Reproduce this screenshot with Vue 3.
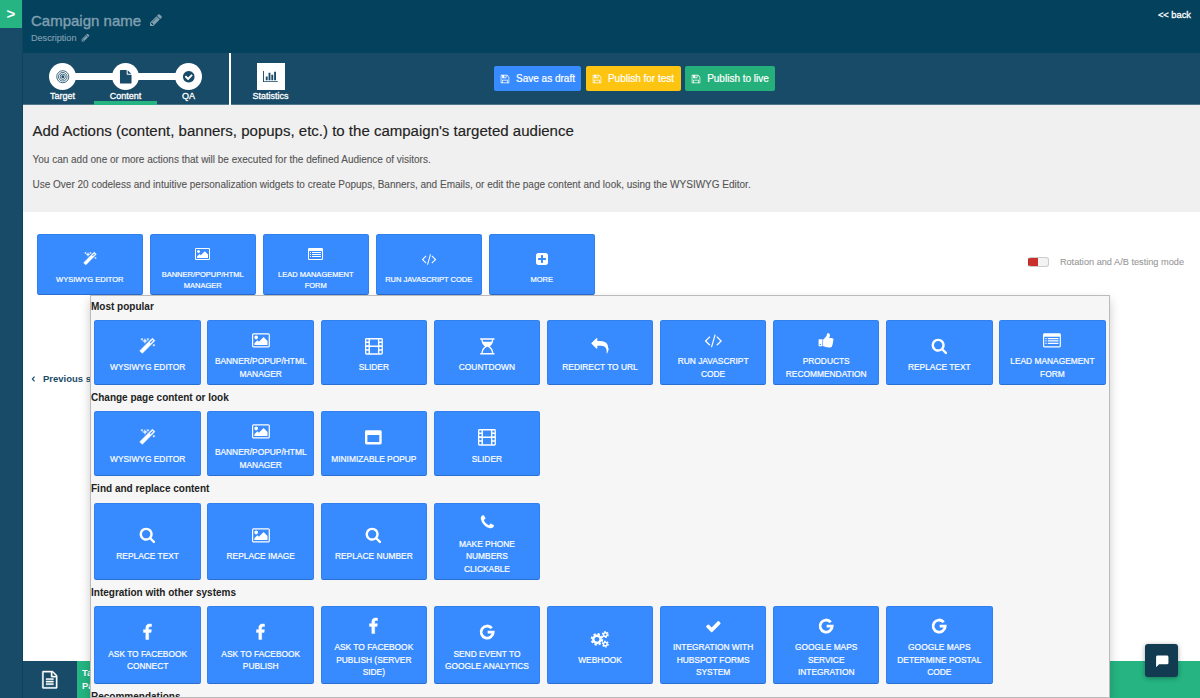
<template>
  <div class="app">
    <aside class="sidebar">
      <button class="toggle">&gt;</button>
    </aside>

    <div class="main">
      <header class="header">
        <div>
          <div class="campaign-name">Campaign name <Icon name="pencil" /></div>
          <div class="campaign-desc">Description <Icon name="pencil" /></div>
        </div>
        <a class="back">&lt;&lt; back</a>
      </header>

      <nav class="toolbar">
        <div class="steps">
          <div
            v-for="step in steps"
            :key="step.label"
            class="step"
            :class="{ active: step.active }"
          >
            <span class="step-circle"><Icon :name="step.icon" /></span>
            <span class="step-label">{{ step.label }}</span>
          </div>
        </div>
        <div class="stats">
          <span class="stats-box"><Icon name="chart" /></span>
          <span class="step-label">Statistics</span>
        </div>
        <div class="buttons">
          <button class="btn btn-draft"><Icon name="save" /><span>Save as draft</span></button>
          <button class="btn btn-test"><Icon name="save" /><span>Publish for test</span></button>
          <button class="btn btn-live"><Icon name="save" /><span>Publish to live</span></button>
        </div>
      </nav>

      <section class="intro">
        <h1>Add Actions (content, banners, popups, etc.) to the campaign's targeted audience</h1>
        <p>You can add one or more actions that will be executed for the defined Audience of visitors.</p>
        <p>Use Over 20 codeless and intuitive personalization widgets to create Popups, Banners, and Emails, or edit the page content and look, using the WYSIWYG Editor.</p>
      </section>

      <section class="content">
        <div class="actions">
          <button v-for="a in quickActions" :key="a.text" class="tile small">
            <span class="tile-icon"><Icon :name="a.icon" /></span>
            <span class="tile-text">{{ a.text }}</span>
          </button>
          <div class="rotation">
            <span class="switch"></span>
            <span>Rotation and A/B testing mode</span>
          </div>
        </div>
        <a class="previous"><Icon name="left" /><span>Previous step</span></a>
      </section>

      <footer class="footer">
        <div class="footer-icon"><Icon name="fileText" /></div>
        <div class="footer-text">Target<br>Pages</div>
      </footer>
    </div>

    <div class="more-menu">
      <div v-for="group in groups" :key="group.title" class="group">
        <h2>{{ group.title }}</h2>
        <div class="group-row" :class="{ tall: group.tall }">
          <button v-for="a in group.items" :key="a.text" class="tile">
            <span class="tile-icon"><Icon :name="a.icon" /></span>
            <span class="tile-text">{{ a.text }}</span>
          </button>
        </div>
      </div>
    </div>

    <button class="chat"><Icon name="chat" /></button>
  </div>
</template>

<script setup>
import { h } from 'vue'

// [viewBox width, markup], every icon is 1792 high
const icons = {
  code: [1792, '<path d="M553 1399l-50 50q-10 10-23 10t-23-10l-466-466q-10-10-10-23t10-23l466-466q10-10 23-10t23 10l50 50q10 10 10 23t-10 23l-393 393 393 393q10 10 10 23t-10 23zm591-1067l-373 1291q-4 13-15.5 19.5t-23.5 2.5l-62-17q-13-4-19.5-15.5t-2.5-24.5l373-1291q4-13 15.5-19.5t23.5-2.5l62 17q13 4 19.5 15.5t2.5 24.5zm657 651l-466 466q-10 10-23 10t-23-10l-50-50q-10-10-10-23t10-23l393-393-393-393q-10-10-10-23t10-23l50-50q10-10 23-10t23 10l466 466q10 10 10 23t-10 23z"/>'],
  search: [1792, '<path transform="translate(0 -60)" d="M1216 832q0-185-131.5-316.5t-316.5-131.5-316.5 131.5-131.5 316.5 131.5 316.5 316.5 131.5 316.5-131.5 131.5-316.5zm512 832q0 52-38 90t-90 38q-54 0-90-38l-343-342q-179 124-399 124-143 0-273.5-55.5t-225-150-150-225-55.5-273.5 55.5-273.5 150-225 225-150 273.5-55.5 273.5 55.5 225 150 150 225 55.5 273.5q0 220-124 399l343 343q37 37 37 90z"/>'],
  picture: [1920, '<path transform="translate(64)" d="M576 576q0 80-56 136t-136 56-136-56-56-136 56-136 136-56 136 56 56 136zm1024 384v448h-1408v-192l320-320 160 160 512-512zm96-704h-1600q-13 0-22.5 9.5t-9.5 22.5v1216q0 13 9.5 22.5t22.5 9.5h1600q13 0 22.5-9.5t9.5-22.5v-1216q0-13-9.5-22.5t-22.5-9.5zm160 32v1216q0 66-47 113t-113 47h-1600q-66 0-113-47t-47-113v-1216q0-66 47-113t113-47h1600q66 0 113 47t47 113z"/>'],
  facebook: [1792, '<path stroke="currentColor" stroke-width="50" d="M1343 12v264h-157q-86 0-116 36t-30 108v189h293l-39 296h-254v759h-306v-759h-255v-296h255v-218q0-186 104-288.5t277-102.5q147 0 228 12z"/>'],
  check: [1792, '<path d="M1671 566q0 40-28 68l-724 724-136 136q-28 28-68 28t-68-28l-136-136-362-362q-28-28-28-68t28-68l136-136q28-28 68-28t68 28l294 295 656-657q28-28 68-28t68 28l136 136q28 28 28 68z"/>'],
  plus: [1792, '<path d="M1408 960v-128q0-26-19-45t-45-19h-320v-320q0-26-19-45t-45-19h-128q-26 0-45 19t-19 45v320h-320q-26 0-45 19t-19 45v128q0 26 19 45t45 19h320v320q0 26 19 45t45 19h128q26 0 45-19t19-45v-320h320q26 0 45-19t19-45zm256-544v960q0 119-84.5 203.5t-203.5 84.5h-960q-119 0-203.5-84.5t-84.5-203.5v-960q0-119 84.5-203.5t203.5-84.5h960q119 0 203.5 84.5t84.5 203.5z"/>'],
  checkCircle: [1792, '<path d="M1412 734q0-28-18-46l-91-90q-19-19-45-19t-45 19l-408 407-226-226q-19-19-45-19t-45 19l-91 90q-18 18-18 46 0 27 18 45l362 362q19 19 45 19 27 0 46-19l543-543q18-18 18-45zm252 162q0 209-103 385.5t-279.5 279.5-385.5 103-385.5-103-279.5-279.5-103-385.5 103-385.5 279.5-279.5 385.5-103 385.5 103 279.5 279.5 103 385.5z"/>'],
  phone: [1792, '<path d="M1600 1240q0 27-10 70.5t-21 68.5q-21 50-122 106-94 51-186 51-27 0-53-3.5t-57.5-12.5-47-14.5-55.5-20.5-49-18q-98-35-175-83-127-79-264-216t-216-264q-48-77-83-175-3-9-18-49t-20.5-55.5-14.5-47-12.5-57.5-3.5-53q0-92 51-186 56-101 106-122 25-11 68.5-21t70.5-10q14 0 21 3 18 6 53 76 11 19 30 54t35 63.5 31 53.5q3 4 17.5 25t21.5 35.5 7 28.5q0 20-28.5 50t-62 55-62 53-28.5 46q0 9 5 22.5t8.5 20.5 14 24 11.5 19q76 137 174 235t235 174q2 1 19 11.5t24 14 20.5 8.5 22.5 5q18 0 46-28.5t53-62 55-62 50-28.5q14 0 28.5 7t35.5 21.5 25 17.5q25 15 53.5 31t63.5 35 54 30q70 35 76 53 3 7 3 21z"/>'],
  pencil: [1792, '<path d="M491 1536l91-91-235-235-91 91v107h128v128h107zm523-928q0-22-22-22-10 0-17 7l-542 542q-7 7-7 17 0 22 22 22 10 0 17-7l542-542q7-7 7-17zm-54-192l416 416-832 832h-416v-416zm683 96q0 53-37 90l-166 166-416-416 166-165q36-38 90-38 53 0 91 38l235 234q37 39 37 91z"/>'],
  save: [1792, '<path d="M512 1536h768v-384h-768v384zm896 0h128v-896q0-14-10-38.5t-20-34.5l-281-281q-10-10-34-20t-39-10v416q0 40-28 68t-68 28h-576q-40 0-68-28t-28-68v-416h-128v1280h128v-416q0-40 28-68t68-28h832q40 0 68 28t28 68v416zm-384-928v-320q0-13-9.5-22.5t-22.5-9.5h-192q-13 0-22.5 9.5t-9.5 22.5v320q0 13 9.5 22.5t22.5 9.5h192q13 0 22.5-9.5t9.5-22.5zm640 32v928q0 40-28 68t-68 28h-1344q-40 0-68-28t-28-68v-1344q0-40 28-68t68-28h928q40 0 88 20t76 48l280 280q28 28 48 76t20 88z"/>'],
  fileText: [1792, '<path stroke="currentColor" stroke-width="40" d="M1596 380q28 28 48 76t20 88v1152q0 40-28 68t-68 28h-1344q-40 0-68-28t-28-68v-1600q0-40 28-68t68-28h896q40 0 88 20t76 48zm-444-244v376h376q-10-29-22-41l-313-313q-12-12-41-22zm384 1528v-1024h-416q-40 0-68-28t-28-68v-416h-768v1536h1280zm-1024-864q0-14 9-23t23-9h704q14 0 23 9t9 23v64q0 14-9 23t-23 9h-704q-14 0-23-9t-9-23v-64zm736 224q14 0 23 9t9 23v64q0 14-9 23t-23 9h-704q-14 0-23-9t-9-23v-64q0-14 9-23t23-9h704zm0 256q14 0 23 9t9 23v64q0 14-9 23t-23 9h-704q-14 0-23-9t-9-23v-64q0-14 9-23t23-9h704z"/>'],
  file: [1792, '<path d="M1152 512v-472q22 14 36 28l408 408q14 14 28 36h-472zm-128 32q0 40 28 68t68 28h544v1056q0 40-28 68t-68 28h-1344q-40 0-68-28t-28-68v-1600q0-40 28-68t68-28h800v544z"/>'],
  chart: [2048, '<path d="M640 896v512h-256v-512h256zm384-512v1024h-256v-1024h256zm1024 1152v128h-2048v-1536h128v1408h1920zm-640-896v768h-256v-768h256zm384-384v1152h-256v-1152h256z"/>'],
  magic: [1792, '<path stroke="currentColor" stroke-width="40" d="M1254 581l293-293-107-107-293 293zm447-293q0 27-18 45l-1286 1286q-18 18-45 18t-45-18l-198-198q-18-18-18-45t18-45l1286-1286q18-18 45-18t45 18l198 198q18 18 18 45zm-1351-190l98 30-98 30-30 98-30-98-98-30 98-30 30-98zm350 162l196 60-196 60-60 196-60-196-196-60 196-60 60-196zm930 478l98 30-98 30-30 98-30-98-98-30 98-30 30-98zm-640-640l98 30-98 30-30 98-30-98-98-30 98-30 30-98z"/>'],
  reply: [1792, '<path d="M1792 1120q0 166-127 451-3 7-10.5 24t-13.5 30-13 22q-12 17-28 17-15 0-23.5-10t-8.5-25q0-9 2.5-26.5t2.5-23.5q5-68 5-123 0-112-19.5-200.5t-54-153.5-89-112-117-78-146.5-49-167.5-24-189.5-7h-224v256q0 26-19 45t-45 19-45-19l-512-512q-19-19-19-45t19-45l512-512q19-19 45-19t45 19 19 45v256h224q713 0 875 403 53 134 53 333z"/>'],
  thumb: [1792, '<path d="M320 1344q0-26-19-45t-45-19q-27 0-45.5 19t-18.5 45q0 27 18.5 45.5t45.5 18.5q26 0 45-18.5t19-45.5zm160-512v640q0 26-19 45t-45 19h-288q-26 0-45-19t-19-45v-640q0-26 19-45t45-19h288q26 0 45 19t19 45zm1184 0q0 86-55 149 15 44 15 76 3 76-43 137 17 56 0 117-15 57-54 94 9 112-49 181-64 76-197 78h-129q-66 0-144-15.5t-121.5-29-120.5-39.5q-123-43-158-44-26-1-45-19.5t-19-44.5v-641q0-25 18-43.5t43-20.5q24-2 76-59t101-121q68-87 101-120 18-18 31-48t17.5-48.5 13.5-60.5q7-39 12.5-61t19.5-52 34-50q19-19 45-19 46 0 82.5 10.5t60 26 40 40.5 24 45 12 50 5 45 .5 39q0 38-9.5 76t-19 60-27.5 56q-3 6-10 18t-11 22-8 24h277q78 0 135 57t57 135z"/>'],
  list: [1920, '<path fill-rule="evenodd" d="M160 128h1600q160 0 160 160v1216q0 160-160 160h-1600q-160 0-160-160v-1216q0-160 160-160zM128 512v992q0 32 32 32h1600q32 0 32-32v-992zM256 640h128v128h-128zM512 640h1152v128h-1152zM256 896h128v128h-128zM512 896h1152v128h-1152zM256 1152h128v128h-128zM512 1152h1152v128h-1152z"/>'],
  film: [1920, '<path fill-rule="evenodd" d="M160 0h1600q160 0 160 160v1472q0 160-160 160h-1600q-160 0-160-160v-1472q0-160 160-160zM140 150v230h240v-230zM140 550v240h240v-240zM140 960v240h240v-240zM140 1380v260h240v-260zM530 150v660h860v-660zM530 970v670h860v-670zM1540 150v230h240v-230zM1540 550v240h240v-240zM1540 960v240h240v-240zM1540 1380v260h240v-260z"/>'],
  hourglass: [1792, '<path d="M130 30h1532v150h-1532zM130 1612h1532v150h-1532z"/><path d="M330 150q0 460 440 746q-440 286-440 746M1462 150q0 460-440 746q440 286 440 746" fill="none" stroke="currentColor" stroke-width="140"/><path d="M330 400h1132q-60 310-440 540h-252q-380-230-440-540z"/>'],
  window: [1792, '<path fill-rule="evenodd" d="M160 128h1472q160 0 160 160v1216q0 160-160 160h-1472q-160 0-160-160v-1216q0-160 160-160zM256 640v768h1280v-768z"/>'],
  google: [1792, '<path d="M1370 440A650 650 0 1 0 1530 870H930" fill="none" stroke="currentColor" stroke-width="300"/>'],
  cogs: [1920, '<g fill="none" stroke="currentColor"><circle cx="640" cy="896" r="395" stroke-width="260"/><circle cx="640" cy="896" r="570" stroke-width="210" stroke-dasharray="240 207.7"/><circle cx="1536" cy="384" r="200" stroke-width="150"/><circle cx="1536" cy="384" r="310" stroke-width="130" stroke-dasharray="170 154.6"/><circle cx="1536" cy="1408" r="200" stroke-width="150"/><circle cx="1536" cy="1408" r="310" stroke-width="130" stroke-dasharray="170 154.6"/></g>'],
  target: [1792, '<g fill="none" stroke="currentColor" stroke-width="110"><circle cx="896" cy="896" r="800"/><circle cx="896" cy="896" r="570"/><circle cx="896" cy="896" r="350"/></g><circle cx="896" cy="896" r="190"/>'],
  left: [1000, '<path d="M800 350L300 896l500 546" fill="none" stroke="currentColor" stroke-width="260"/>'],
  chat: [1792, '<path d="M340 200h1200q180 0 180 180v760q0 180-180 180h-1020l-380 360v-1300q0-180 200-180z"/>']
}

const Icon = ({ name }) => h('svg', {
  class: 'icon',
  viewBox: `0 0 ${icons[name][0]} 1792`,
  width: `${icons[name][0] / 1792}em`,
  height: '1em',
  innerHTML: icons[name][1]
})
Icon.props = ['name']

const steps = [
  { label: 'Target', icon: 'target' },
  { label: 'Content', icon: 'file', active: true },
  { label: 'QA', icon: 'checkCircle' }
]

const quickActions = [
  { icon: 'magic', text: 'WYSIWYG EDITOR' },
  { icon: 'picture', text: 'BANNER/POPUP/HTML MANAGER' },
  { icon: 'list', text: 'LEAD MANAGEMENT FORM' },
  { icon: 'code', text: 'RUN JAVASCRIPT CODE' },
  { icon: 'plus', text: 'MORE' }
]

const groups = [
  {
    title: 'Most popular',
    items: [
      { icon: 'magic', text: 'WYSIWYG EDITOR' },
      { icon: 'picture', text: 'BANNER/POPUP/HTML MANAGER' },
      { icon: 'film', text: 'SLIDER' },
      { icon: 'hourglass', text: 'COUNTDOWN' },
      { icon: 'reply', text: 'REDIRECT TO URL' },
      { icon: 'code', text: 'RUN JAVASCRIPT CODE' },
      { icon: 'thumb', text: 'PRODUCTS RECOMMENDATION' },
      { icon: 'search', text: 'REPLACE TEXT' },
      { icon: 'list', text: 'LEAD MANAGEMENT FORM' }
    ]
  },
  {
    title: 'Change page content or look',
    items: [
      { icon: 'magic', text: 'WYSIWYG EDITOR' },
      { icon: 'picture', text: 'BANNER/POPUP/HTML MANAGER' },
      { icon: 'window', text: 'MINIMIZABLE POPUP' },
      { icon: 'film', text: 'SLIDER' }
    ]
  },
  {
    title: 'Find and replace content',
    tall: true,
    items: [
      { icon: 'search', text: 'REPLACE TEXT' },
      { icon: 'picture', text: 'REPLACE IMAGE' },
      { icon: 'search', text: 'REPLACE NUMBER' },
      { icon: 'phone', text: 'MAKE PHONE\nNUMBERS\nCLICKABLE' }
    ]
  },
  {
    title: 'Integration with other systems',
    tall: true,
    items: [
      { icon: 'facebook', text: 'ASK TO FACEBOOK CONNECT' },
      { icon: 'facebook', text: 'ASK TO FACEBOOK PUBLISH' },
      { icon: 'facebook', text: 'ASK TO FACEBOOK PUBLISH (SERVER SIDE)' },
      { icon: 'google', text: 'SEND EVENT TO GOOGLE ANALYTICS' },
      { icon: 'cogs', text: 'WEBHOOK' },
      { icon: 'check', text: 'INTEGRATION WITH HUBSPOT FORMS SYSTEM' },
      { icon: 'google', text: 'GOOGLE MAPS SERVICE INTEGRATION' },
      { icon: 'google', text: 'GOOGLE MAPS DETERMINE POSTAL CODE' }
    ]
  },
  { title: 'Recommendations', items: [] }
]
</script>

<style>
body {
  margin: 0;
  overflow: hidden;
}
</style>

<style scoped>
.app {
  position: relative;
  display: flex;
  height: 698px;
  overflow: hidden;
  font-family: "Liberation Sans", Arial, sans-serif;
  background: #fff;
}

.app * {
  box-sizing: border-box;
}

button {
  border: none;
  padding: 0;
  font-family: inherit;
  color: #fff;
}

.icon {
  display: block;
  flex-shrink: 0;
  fill: currentColor;
  overflow: visible;
}

.sidebar {
  width: 23px;
  flex-shrink: 0;
  background: #184b67;
  border-right: 1px solid #0c435f;
}

.toggle {
  display: block;
  width: 22px;
  height: 28px;
  background: #25b482;
  font-size: 15px;
  font-weight: bold;
  line-height: 28px;
}

.main {
  flex: 1;
  min-width: 0;
  display: flex;
  flex-direction: column;
}

.header {
  height: 53px;
  flex-shrink: 0;
  display: flex;
  justify-content: space-between;
  padding: 11px 9px 0 8px;
  background: #04415d;
  color: #7f9fb0;
}

.campaign-name {
  display: flex;
  align-items: center;
  gap: 8px;
  height: 18px;
  font-size: 15px;
  -webkit-text-stroke: 0.4px;
}

.campaign-name .icon {
  font-size: 14px;
}

.campaign-desc {
  display: flex;
  align-items: center;
  gap: 4px;
  height: 17px;
  font-size: 9.1px;
  -webkit-text-stroke: 0.15px;
}

.back {
  height: 8px;
  font-size: 9.3px;
  line-height: 8px;
  color: #fff;
  -webkit-text-stroke: 0.3px;
}

.toolbar {
  height: 52px;
  flex-shrink: 0;
  display: flex;
  background: #184b67;
  border-bottom: 1px solid #52788d;
  color: #fff;
}

.steps {
  display: flex;
  width: 208px;
  height: 52px;
  padding-left: 8px;
  border-right: 2px solid #fff;
}

.step {
  width: 63px;
  display: flex;
  flex-direction: column;
  align-items: center;
  padding-top: 10px;
  border-bottom: 4px solid transparent;
}

.step.active {
  border-bottom-color: #25b482;
}

.step-circle {
  position: relative;
  display: flex;
  align-items: center;
  justify-content: center;
  width: 27px;
  height: 27px;
  flex-shrink: 0;
  border-radius: 50%;
  background: #fff;
  color: #184b67;
  font-size: 13.5px;
}

.step + .step .step-circle::before {
  content: "";
  position: absolute;
  right: 26px;
  top: 10px;
  width: 38px;
  height: 7px;
  background: #fff;
}

.step-label {
  font-size: 9px;
  line-height: 13px;
  -webkit-text-stroke: 0.3px;
}

.stats {
  width: 79px;
  display: flex;
  flex-direction: column;
  align-items: center;
  padding-top: 10px;
}

.stats-box {
  display: flex;
  align-items: center;
  justify-content: center;
  width: 28px;
  height: 27px;
  background: #fff;
  color: #184b67;
  font-size: 13px;
}

.buttons {
  display: flex;
  gap: 4.5px;
  margin-left: 184px;
  padding-top: 13px;
}

.btn {
  display: flex;
  align-items: center;
  justify-content: center;
  gap: 6px;
  width: 87px;
  height: 25px;
  border-radius: 2px;
  font-size: 10px;
  white-space: nowrap;
  -webkit-text-stroke: 0.2px;
}

.btn-draft {
  background: #388bff;
}

.btn-test {
  width: 95px;
  background: #fdc512;
}

.btn-live {
  width: 90px;
  background: #25b07b;
}

.intro {
  height: 107px;
  flex-shrink: 0;
  padding: 17px 9.5px 0;
  background: #f0f0f0;
}

.intro h1 {
  margin: 0 0 12px;
  font-size: 15.02px;
  font-weight: normal;
  line-height: 18px;
  color: #222;
  -webkit-text-stroke: 0.15px;
}

.intro p {
  margin: 0 0 9px;
  font-size: 10px;
  line-height: 16px;
  color: #555;
  white-space: nowrap;
  -webkit-text-stroke: 0.1px;
}

.content {
  flex: 1;
  padding: 22px 16px 0 13.5px;
}

.actions {
  display: flex;
  gap: 6.5px;
}

.tile {
  display: flex;
  flex-direction: column;
  align-items: center;
  justify-content: center;
  width: 106.5px;
  flex-shrink: 0;
  padding: 0 5px;
  border: 1px solid #3180ee;
  border-bottom-color: #2a6fd0;
  border-radius: 2.5px;
  background: #388bff;
  font-size: 8.4px;
  line-height: 12.5px;
  text-align: center;
  -webkit-text-stroke: 0.2px;
}

.tile-icon {
  display: flex;
  align-items: center;
  height: 30px;
  font-size: 16.7px;
}

.tile.small {
  height: 61px;
  font-size: 7.5px;
  line-height: 11px;
}

.small .tile-icon {
  font-size: 14px;
}

.tile-text {
  width: 93px;
  white-space: pre-line;
}

.rotation {
  display: flex;
  align-items: center;
  gap: 11px;
  height: 16px;
  margin: 20px 0 0 auto;
  font-size: 9.2px;
  color: #999;
  white-space: nowrap;
  -webkit-text-stroke: 0.1px;
}

.switch {
  width: 21px;
  height: 10px;
  border: 1px solid #ccc;
  border-left-color: #b52b27;
  border-radius: 3px;
  background: linear-gradient(to right, #c9302c 9px, #f3f3f3 9px);
}

.previous {
  display: flex;
  align-items: center;
  gap: 8px;
  margin: 77px 0 0 -6px;
  font-size: 9.5px;
  font-weight: bold;
  line-height: 14px;
  color: #184b67;
}

.previous .icon {
  font-size: 8px;
}

.footer {
  display: flex;
  height: 37px;
  flex-shrink: 0;
  background: #25b482;
}

.footer-icon {
  display: flex;
  align-items: center;
  justify-content: center;
  width: 54px;
  padding-right: 1px;
  background: #184b67;
  color: #fff;
  font-size: 17.5px;
}

.footer-text {
  padding: 6px 5px;
  font-size: 9.3px;
  font-weight: bold;
  line-height: 13px;
  color: #fff;
}

.more-menu {
  position: absolute;
  left: 90px;
  top: 295px;
  width: 1020px;
  height: 402.5px;
  overflow: hidden;
  border: 1px solid #bbb;
  background: #f6f6f6;
  box-shadow: 0 5px 10px rgba(0, 0, 0, 0.2);
}

.group h2 {
  margin: 0;
  height: 26.3px;
  font-size: 10px;
  line-height: 26px;
  color: #222;
}

.group:first-child h2 {
  height: 24px;
  line-height: 21px;
}

.group-row {
  display: flex;
  gap: 6.6px;
  height: 65px;
  padding-left: 3.4px;
}

.group-row.tall {
  height: 77.5px;
}

.chat {
  position: absolute;
  left: 1145px;
  top: 644px;
  display: flex;
  align-items: center;
  justify-content: center;
  width: 33px;
  height: 33px;
  border-radius: 3px;
  background: #123a50;
  box-shadow: 0 1px 5px rgba(0, 0, 0, 0.35);
  font-size: 14px;
}
</style>
